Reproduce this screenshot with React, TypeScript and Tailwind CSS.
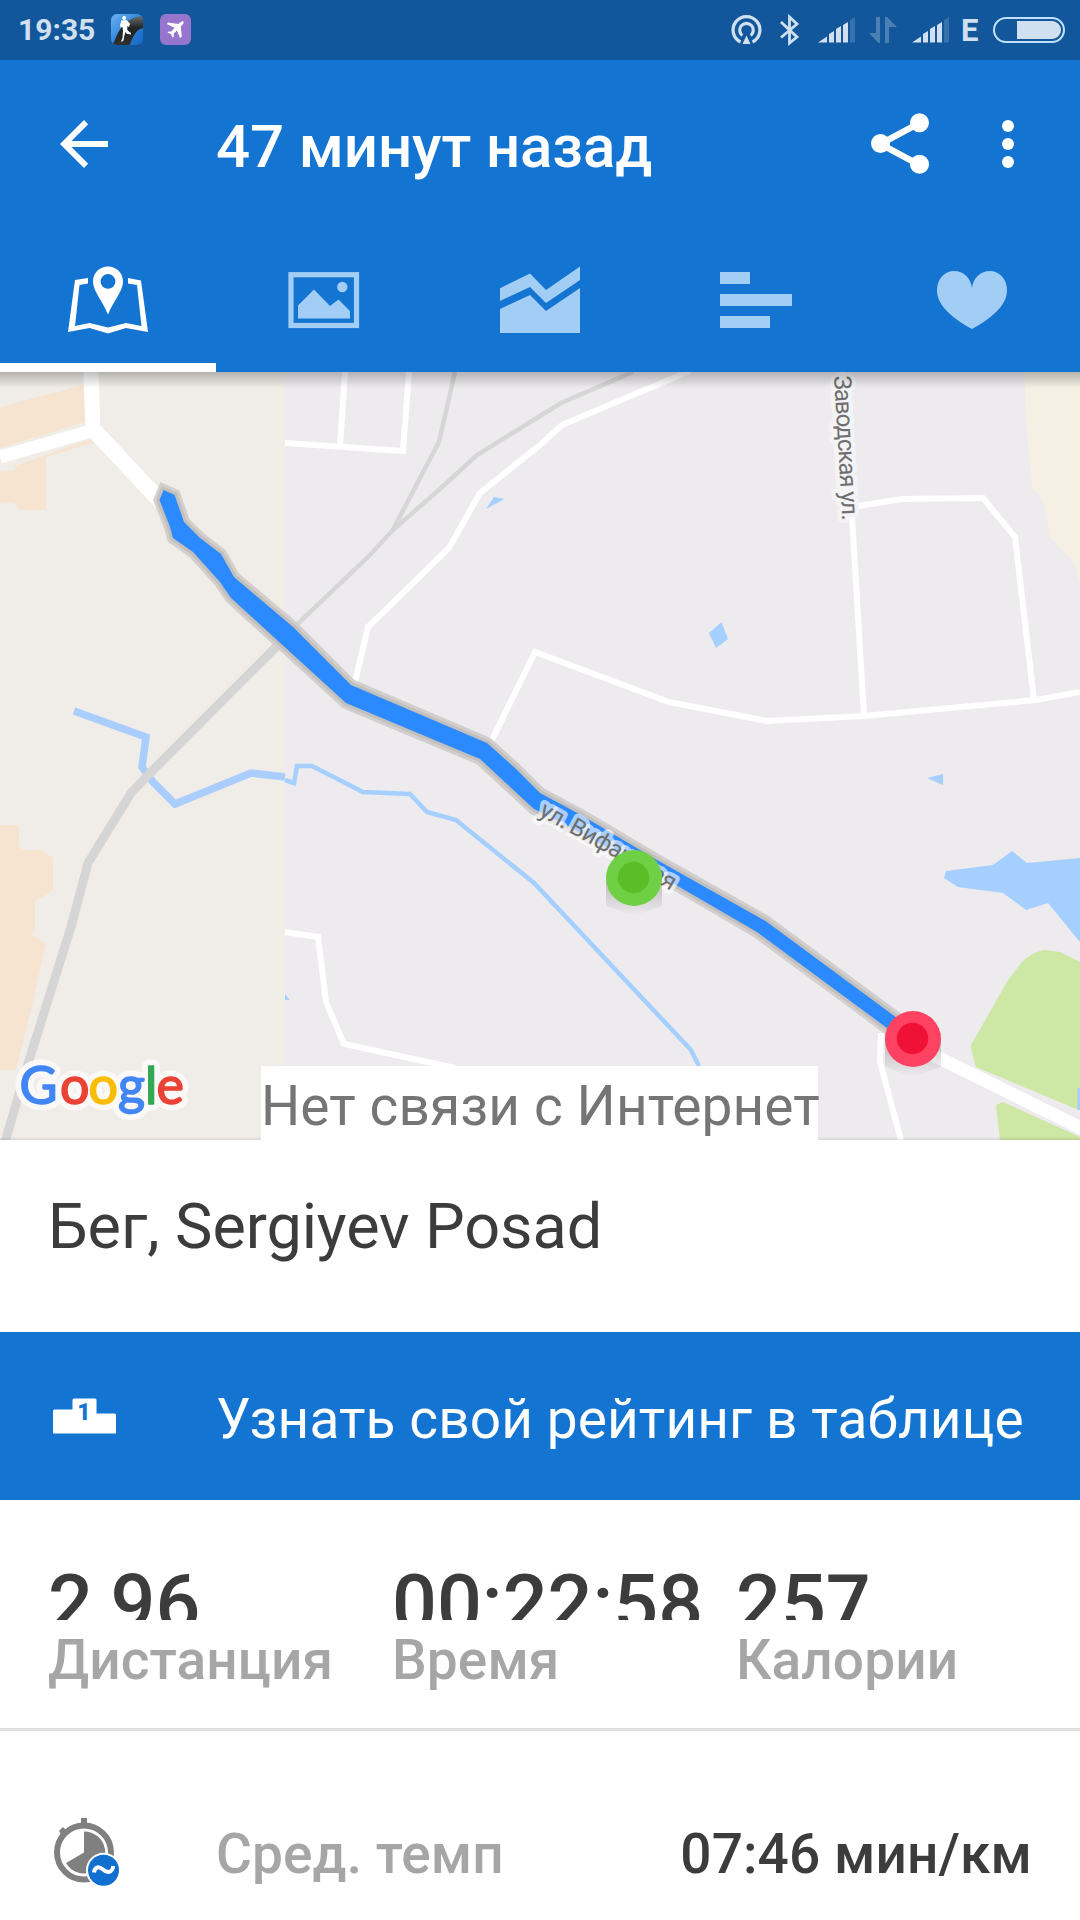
import React from 'react';

const BRAND = '#1474d2';
const TAB_IDLE = '#a2cdf5';
const STATUS_FG = '#d0e0f0';

const ROUTE =
  'M163.6 490 L174.6 495 L184 522 L200 538 L221 554 L234 577 L293 627 L351 685 L487 743 L515 768 L540 793 L581 815 L657 860 L765.5 921 L897 1018 L887 1028 L757 932 L676 885 L566 825 L534 809 L480 759 L346 703 L231 598 L220 582 L193 552 L173 538 L170 527 L159.5 500 Z';

const LOGO = [
  { char: 'G', x: 19.5, fill: '#4285f4' },
  { char: 'o', x: 60, fill: '#ea4335' },
  { char: 'o', x: 88.5, fill: '#fbbc05' },
  { char: 'g', x: 118, fill: '#4285f4' },
  { char: 'l', x: 145, fill: '#34a853' },
  { char: 'e', x: 156.5, fill: '#ea4335' }
];

const stats = [
  { value: '2,96', label: 'Дистанция' },
  { value: '00:22:58', label: 'Время' },
  { value: '257', label: 'Калории' }
];

const Signal: React.FC = () => (
  <svg width="38" height="26" viewBox="0 0 38 26" fill={STATUS_FG}>
    <path d="M0 25.5 L9 19.5 V25.5 Z" />
    <path d="M11 17 L16 14 V25.5 H11 Z" />
    <path d="M18 12 L23 9 V25.5 H18 Z" />
    <path d="M25 8 L30 5 V25.5 H25 Z" />
    <path d="M32 3 L37 0 V25.5 H32 Z" opacity="0.2" />
  </svg>
);

const StatusBar: React.FC = () => (
  <div className="flex h-[60px] items-center bg-[#12579b] pl-[18px] pr-[15px] text-[#d0e0f0]">
    <span className="w-[93px] text-[30px] font-bold leading-none">19:35</span>
    <svg width="32" height="32" viewBox="0 0 32 32">
      <defs>
        <clipPath id="app-clip"><rect width="32" height="31" rx="6" /></clipPath>
        <linearGradient id="app-bg" x1="0" y1="0" x2="1" y2="1">
          <stop offset="0" stopColor="#6bb2f2" />
          <stop offset="0.5" stopColor="#2f85dc" />
          <stop offset="1" stopColor="#1465bf" />
        </linearGradient>
        <linearGradient id="app-road" x1="0" y1="0" x2="0" y2="1">
          <stop offset="0" stopColor="#6b6d70" />
          <stop offset="0.4" stopColor="#222" />
          <stop offset="1" stopColor="#303030" />
        </linearGradient>
      </defs>
      <g clipPath="url(#app-clip)">
        <rect width="32" height="32" fill="url(#app-bg)" />
        <path d="M1 32 C8 18 11 4 32 2 V14 C23 16 22 25 18 32 Z" fill="url(#app-road)" />
      </g>
      <circle cx="13.2" cy="4" r="2" fill="#fff" />
      <path d="M10.500 6.500 L15.500 6 L19 9.500 L18 13 L16.300 12 V16 L19.500 19 L20 17.500 V20.500 L15.500 19.800 L14.800 17.500 L13.500 21 L12.500 26.500 L10.500 28 L10.300 27 L11.500 24 L12 17 L11.500 13 L9.500 13.500 L9 11 Z" fill="#fff" />
    </svg>
    <svg className="ml-[17px]" width="31" height="32" viewBox="0 0 31 32">
      <rect width="31" height="31" rx="6" fill="#9575cd" />
      <path
        d="M23.5 7.5 C22 7 20.5 8 18.5 10 L8 8.5 L6.8 10 L14.5 13.8 L11.5 17.5 L8.5 17.5 L7.5 18.7 L11 20 L12.5 23.5 L13.8 22.8 L13.8 19.5 L17 16.5 L20 24 L21.8 22.8 L20.8 12.5 C22.8 10.5 24.3 8.8 23.5 7.5 Z"
        fill="#fff"
      />
    </svg>
    <div className="ml-auto flex h-8 items-center">
      <svg width="32" height="32" viewBox="0 0 32 32" fill="none" stroke={STATUS_FG} strokeWidth="3.2">
        <path d="M9.5 28 A13.4 13.4 0 1 1 21.5 28" />
        <path d="M11.3 21.5 A6.8 6.8 0 1 1 19.7 21.5" />
        <path d="M11.5 30 L15.5 21.5 L19.5 30 Z" fill={STATUS_FG} stroke="none" />
      </svg>
      <svg className="ml-[16px]" width="22" height="32" viewBox="0 0 22 32" fill="none" stroke={STATUS_FG} strokeWidth="2.8">
        <path d="M2 8 L18 23 L10.5 29 V3 L18 10 L2 23.5" />
      </svg>
      <div className="ml-[17px]"><Signal /></div>
      <svg className="ml-[13px]" width="28" height="26" viewBox="0 0 28 26" fill={STATUS_FG} opacity="0.3">
        <path d="M7 0 H11 V26 H9.5 L0 16 H7 Z" />
        <path d="M16 0 H18 L28 10 H20 V26 H16 Z" />
      </svg>
      <div className="ml-[15px]"><Signal /></div>
      <span className="ml-[11px] w-[21px] text-[31px] font-bold leading-none">E</span>
      <svg className="ml-[11px]" width="72" height="26" viewBox="0 0 72 26">
        <rect x="1" y="1" width="70" height="24" rx="12" fill="none" stroke="#bfe0f8" strokeWidth="2" />
        <path d="M24 4 H59 A9 9 0 0 1 59 22 H24 Z" fill={STATUS_FG} />
      </svg>
    </div>
  </div>
);

const Toolbar: React.FC = () => (
  <div className="flex h-[168px] items-center pl-12 pr-9">
    <svg width="72" height="72" viewBox="0 0 24 24" fill="#fff">
      <path d="M20 11H7.83l5.59-5.59L12 4l-8 8 8 8 1.41-1.41L7.83 13H20v-2z" />
    </svg>
    <h1 className="ml-24 pt-[5px] text-[60px] font-medium leading-none tracking-[-0.1px] text-white">47 минут назад</h1>
    <svg className="ml-auto" width="58" height="62" viewBox="0 0 58 62" fill="#fff">
      <path d="M48.5 10 L9.5 31 L48.5 52" fill="none" stroke="#fff" strokeWidth="6.5" />
      <circle cx="9.5" cy="30.5" r="9.5" />
      <circle cx="48.5" cy="9.7" r="9.5" />
      <circle cx="48.5" cy="51.3" r="9.5" />
    </svg>
    <svg className="ml-[43px]" width="72" height="72" viewBox="0 0 72 72" fill="#fff">
      <circle cx="36" cy="18" r="6" />
      <circle cx="36" cy="36" r="6" />
      <circle cx="36" cy="54" r="6" />
    </svg>
  </div>
);

// Tab icons share the page's y range 228..372
const Tabs: React.FC = () => (
  <div className="grid h-36 grid-cols-5">
    <div className="border-b-[9px] border-white">
      <svg width="216" height="135" viewBox="0 228 216 135" fill="#fff">
        <path d="M68 332 L75 280 L88 278 V283.5 L79.5 285 L75 326 L89.5 323 L108 327.5 L126 323 L141.5 326 L137 285 L128 283.5 V278 L141 280.5 L148 332 L126 328 L108 333.5 L89.5 328 Z" />
        <path
          fillRule="evenodd"
          d="M108 266.5 C99.5 266.5 93 273 93 281.5 C93 291 102 300 108 314.5 C114 300 123 291 123 281.5 C123 273 116.500 266.5 108 266.5 Z M108 274 A7.4 7.4 0 1 1 108 288.8 A7.4 7.4 0 1 1 108 274 Z"
        />
      </svg>
    </div>
    <svg width="216" height="144" viewBox="216 228 216 144" fill={TAB_IDLE}>
      <rect x="291" y="274.7" width="65.500" height="50.800" fill="none" stroke={TAB_IDLE} strokeWidth="5.200" />
      <path d="M298 305.500 L314 289.500 L330 306 L338.500 299.500 L350 311 V318.500 H298 Z" />
      <circle cx="342.300" cy="287" r="5.200" />
    </svg>
    <svg width="216" height="144" viewBox="432 228 216 144" fill={TAB_IDLE}>
      <path d="M500 288.300 L530 273.500 L546 290 L580 266.500 V280 L546 303 L530 287 L500 301 Z" />
      <path d="M500 309 L530 295 L546 311 L580 288 V333 H500 Z" />
    </svg>
    <svg width="216" height="144" viewBox="648 228 216 144" fill={TAB_IDLE}>
      <rect x="720" y="272" width="30" height="12" />
      <rect x="720" y="294" width="72" height="12" />
      <rect x="720" y="316" width="50" height="12" />
    </svg>
    <svg width="216" height="144" viewBox="864 228 216 144" fill={TAB_IDLE}>
      <path d="M972 329 C950 317 937 304 937 290.500 C937 279 944.500 271 954 271 C963.500 271 971 278 972 288 C973 278 980.500 271 990 271 C999.500 271 1007 279 1007 290.500 C1007 304 994 317 972 329 Z" />
    </svg>
  </div>
);

const MapView: React.FC = () => (
  <div className="relative h-[768px] overflow-hidden">
    <svg className="block" width="1080" height="768" viewBox="0 372 1080 768" fill="none">
      <defs>
        <linearGradient id="pin-shadow" x1="0" y1="0" x2="0" y2="1">
          <stop offset="0" stopColor="#000" stopOpacity="0.22" />
          <stop offset="1" stopColor="#000" stopOpacity="0" />
        </linearGradient>
        <path id="vifanskaya" d="M538 815 L598 848 L700 908" />
        <path id="zavodskaya" d="M834 376 L843 530" />
      </defs>

      {/* land */}
      <rect x="0" y="372" width="285" height="768" fill="#f0ede8" />
      <rect x="285" y="372" width="795" height="768" fill="#edebee" />
      <g fill="#f7e4d0">
        <path d="M0 407 L83 385 L86 422 L0 448 Z" />
        <path d="M15 466 L93 438 L96 442 L46 457 V510 H20 L14 503 L0 502 V472 L15 470 Z" />
        <path d="M0 825 H19 V847 L24 850 H42 L53 858 V889 L48 894 L35 901 V930 L31 934 L46 944 L31 1010 L16 1070 H0 Z" />
      </g>
      <path d="M1024 372 L1027 430 L1032 487 L1043 500 L1050 537 L1074 563 L1080 583 V372 Z" fill="#f5efe4" />
      <g fill="#cde7a5">
        <path d="M970.500 1046 L1008 980 L1022 962 Q1032 952 1044.500 950 L1060 952 L1080 962 V1110 L1074 1108 L976 1067 Z" />
        <path d="M996 1105 L1003 1102 L1080 1137 V1140 H1000 Z" />
      </g>

      {/* water */}
      <g fill="#a5cfff">
        <path d="M486 509 L494 497 L504.500 499 Z" />
        <path d="M721.500 622 L728 639 L716 648 L709 633 Z" />
        <path d="M927 778 L943 774 V785 Z" />
        <path d="M944 878 L946 871 L993 865 L1012 851 L1027 863 L1080 858 V942 L1048 903 L1026 910 L1003 893 L958 887 Z" />
        <path d="M1077.500 1088 H1080 V1110 H1077.500 Z" />
        <path d="M285 994 L290 1000 H285 Z" />
      </g>
      <path d="M74 711 L146 737 L142 767 L153 782 L175 804 L251 773 L285 777" stroke="#a9cdfc" strokeWidth="7.500" />
      <path d="M285 780 L294 783 L297 766 H312 L363 792 L410 794 L427 812 L456 820 L534 883 L691 1050 L699 1066" stroke="#a5cfff" strokeWidth="4.500" />

      {/* railways */}
      <g stroke="#d6d6d6" strokeWidth="4.500">
        <path d="M455 372 L439 442 L398 520 L393 530" />
        <path d="M633 372 L561 403 L540 416 L477 455 L441 488 L393 530 L368 557 L285 636" />
      </g>
      <path d="M296 627 L155 768 L131 793 L88 863 L71 927 L26 1070 L5 1142" stroke="#d6d5d5" strokeWidth="9" />

      {/* streets */}
      <g stroke="#fff" strokeWidth="6">
        <path d="M285 443 L403 451 L409 372" />
        <path d="M340 446 L345 372" />
        <path d="M355 682 L368 627 L449 548 L480 493 L540 445 L562 425 L609 405 L690 371" />
        <path d="M492 740 L535 652 L669 702 L767 721 L864 716 L1036 700 L1080 692" />
        <path d="M843 372 L851 500 L864 716" />
        <path d="M852 507 L902 499 L983 498 L1015 537 L1034 700" />
        <path d="M285 932 L318 937 L326 1002 L344 1044 L455 1068" />
        <path d="M881 1033 L880 1062 L901 1140" />
      </g>
      <g stroke="#fff">
        <path d="M91 372 L93 430" strokeWidth="15" />
        <path d="M0 457 L98 429" strokeWidth="13" />
        <path d="M91 427 L162 503" strokeWidth="16" />
        <path d="M534 805 L680 887 L760 933 L913 1045 L1085 1130" strokeWidth="13" />
      </g>

      {/* track */}
      <path d={ROUTE} fill="#c6c3c2" stroke="#cfccca" strokeWidth="12" opacity="0.9" />
      <path d={ROUTE} fill="#c6c3c2" stroke="#b9b5b3" strokeWidth="6" opacity="0.6" />
      <path d={ROUTE} fill="#2b8aff" />

      {/* street names: halo first, so it never covers a neighbouring glyph */}
      <g fontFamily="Roboto, sans-serif" fontSize="24" strokeLinejoin="round">
        <text stroke="#fff" strokeWidth="8" strokeOpacity="0.62">
          <textPath href="#vifanskaya" textLength="153">ул. Вифанская</textPath>
        </text>
        <text fill="#6f6f6f" aria-hidden="true">
          <textPath href="#vifanskaya" textLength="153">ул. Вифанская</textPath>
        </text>
        <text stroke="#f4f3f5" strokeWidth="9">
          <textPath href="#zavodskaya" textLength="145">Заводская ул.</textPath>
        </text>
        <text fill="#6f6f6f" aria-hidden="true">
          <textPath href="#zavodskaya" textLength="145">Заводская ул.</textPath>
        </text>
      </g>

      {/* start / finish */}
      <path d="M606 878 H662 V906 L634 916 L606 906 Z" fill="url(#pin-shadow)" />
      <circle cx="634" cy="878" r="28" fill="#6fd045" />
      <circle cx="633.500" cy="877.500" r="15.700" fill="#5abf27" />
      <path d="M885 1039 H941 V1067 L913 1077 L885 1067 Z" fill="url(#pin-shadow)" />
      <circle cx="913" cy="1039" r="28" fill="#ff4262" />
      <circle cx="912.500" cy="1038.500" r="15.700" fill="#f01236" />

      {/* Google */}
      <g fontFamily="Lato, sans-serif" fontSize="52" strokeLinejoin="round">
        <text y="1104" stroke="#faf9f8" strokeWidth="13">
          {LOGO.map((l, i) => <tspan key={i} x={l.x}>{l.char}</tspan>)}
        </text>
        <text y="1104" strokeWidth="1.6" aria-hidden="true">
          {LOGO.map((l, i) => <tspan key={i} x={l.x} fill={l.fill} stroke={l.fill}>{l.char}</tspan>)}
        </text>
      </g>
    </svg>
    <div className="absolute inset-x-0 top-0 h-4 bg-gradient-to-b from-black/25 to-transparent" />
    <div className="absolute inset-x-0 bottom-0 h-[3px] bg-gradient-to-t from-black/10 to-transparent" />
    <div className="absolute bottom-0 left-[261px] h-[74px] w-[557px] whitespace-nowrap bg-white text-[55px] leading-[80px] tracking-[0.1px] text-[#757575]">
      Нет связи с Интернет
    </div>
  </div>
);

const PodiumIcon: React.FC = () => (
  <svg width="63" height="36" viewBox="0 0 63 36">
    <path d="M0 13 Q0 11.500 1.500 11.500 H19.500 V2 Q19.500 0.500 21 0.500 H42 Q43.500 0.500 43.500 2 V15.500 H61.500 Q63 15.500 63 17 V35.500 H0 Z" fill="#fff" />
    <text x="31" y="21.500" textAnchor="middle" fontFamily="Roboto, sans-serif" fontSize="23" fontWeight="900" fill={BRAND}>1</text>
  </svg>
);

const PaceIcon: React.FC = () => (
  <svg width="72" height="72" viewBox="48 1818 72 72">
    <circle cx="84" cy="1852.500" r="27" fill="none" stroke="#808080" strokeWidth="6" />
    <path d="M81 1818 H87 V1825 H81 Z" fill="#808080" />
    <path d="M59 1831 L63 1827 L67 1831 L62 1836 Z" fill="#808080" />
    <path d="M84 1852.500 V1831.500 A21 21 0 1 1 66 1863 Z" fill="#808080" />
    <circle cx="103.500" cy="1870.300" r="17.500" fill="#fff" />
    <circle cx="103.500" cy="1870.300" r="15.500" fill="#116fd0" />
    <path d="M94 1872.500 C95 1866 99 1866.500 103 1869.500 C107 1873 112 1873.500 113.300 1866" fill="none" stroke="#fff" strokeWidth="4" />
  </svg>
);

export default function App() {
  return (
    <div className="h-[1920px] w-[1080px] overflow-hidden bg-white font-[Roboto,sans-serif]">
      <StatusBar />
      <header className="bg-[#1474d2]">
        <Toolbar />
        <Tabs />
      </header>

      <MapView />

      <div className="flex h-48 items-center px-12 pb-[19px]">
        <h2 className="text-[63px] leading-none tracking-[-0.1px] text-[#3c3c3c]">Бег, Sergiyev Posad</h2>
      </div>

      <div className="flex h-[168px] items-center bg-[#1474d2] pl-[53px]">
        <PodiumIcon />
        <span className="ml-[100px] whitespace-nowrap pt-[6px] text-[55px] leading-none tracking-[0.1px] text-white">
          Узнать свой рейтинг в таблице
        </span>
      </div>

      <div className="grid h-[231px] grid-cols-3 border-b-[3px] border-[#e0e0e0] pl-12 pt-[60px]">
        {stats.map(s => (
          <div key={s.label} className="font-medium">
            <div className="h-[60px] overflow-hidden whitespace-nowrap text-[79px] leading-[89px] text-[#3c3c3c]">{s.value}</div>
            <div className="text-[55px] leading-[80px] tracking-[0.1px] text-[#a6a6a6]">{s.label}</div>
          </div>
        ))}
      </div>

      <div className="flex items-center px-12 pt-[87px] text-[55px] font-medium leading-[72px] tracking-[0.1px]">
        <PaceIcon />
        <span className="ml-24 text-[#a6a6a6]">Сред. темп</span>
        <span className="ml-auto text-[#3c3c3c]">07:46 мин/км</span>
      </div>
    </div>
  );
}
